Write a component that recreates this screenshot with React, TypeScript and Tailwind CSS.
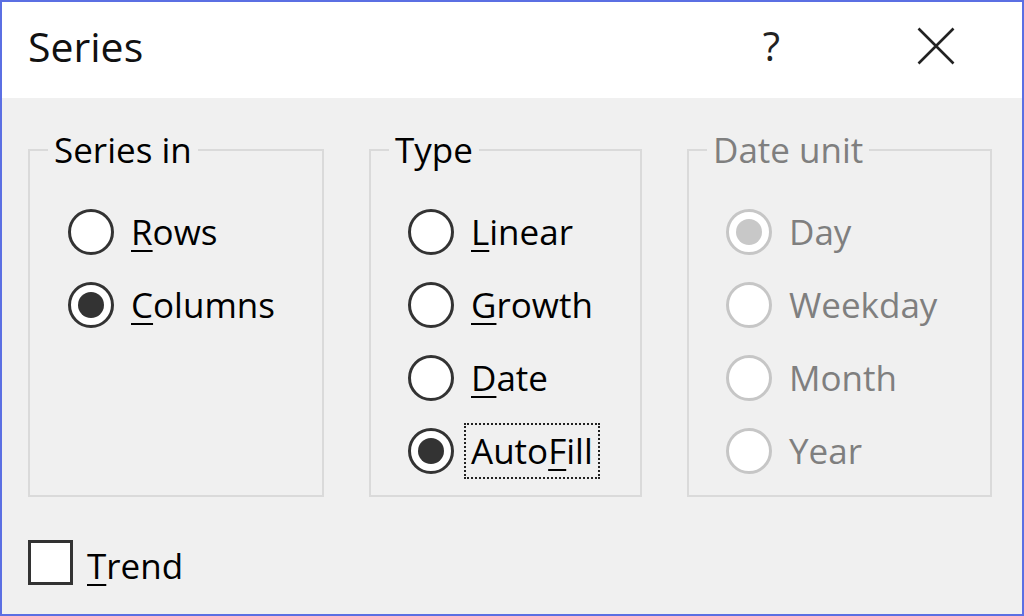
import React from "react";

type Opt = { label: string; key?: number; checked?: boolean; focus?: boolean };

function Radio({ checked, disabled }: { checked?: boolean; disabled?: boolean }) {
  return (
    <div
      className={`w-[46px] h-[46px] rounded-full border-[3px] bg-white flex items-center justify-center shrink-0 ${
        disabled ? "border-[#c6c6c6]" : "border-[#333333]"
      }`}
    >
      {checked && (
        <div className={`w-[26px] h-[26px] rounded-full ${disabled ? "bg-[#c8c8c8]" : "bg-[#333333]"}`} />
      )}
    </div>
  );
}

function Label({ text, k }: { text: string; k?: number }) {
  if (k === undefined) return <>{text}</>;
  return (
    <>
      {text.slice(0, k)}
      <span className="underline decoration-2 underline-offset-[5px]">{text[k]}</span>
      {text.slice(k + 1)}
    </>
  );
}

function Group({
  title,
  width,
  pl,
  opts,
  disabled,
}: {
  title: string;
  width: string;
  pl: string;
  opts: Opt[];
  disabled?: boolean;
}) {
  return (
    <fieldset className={`${width} h-[367px] border-2 border-[#dadada]`}>
      <legend
        className={`ml-[18px] px-[6px] leading-[40px] ${disabled ? "text-[#7f7f7f]" : "text-black"}`}
      >
        {title}
      </legend>
      <div className={`${pl} pt-[25px]`}>
        {opts.map((o) => (
          <div key={o.label} className="h-[73px] flex items-center gap-[16px]">
            <Radio checked={o.checked} disabled={disabled} />
            <span
              className={`leading-[52px] px-[5px] -mx-[6px] border-2 ${
                o.focus ? "border-dotted border-[#222222]" : "border-transparent"
              } ${disabled ? "text-[#7f7f7f]" : "text-black"}`}
            >
              <Label text={o.label} k={o.key} />
            </span>
          </div>
        ))}
      </div>
    </fieldset>
  );
}

export default function App() {
  return (
    <div className="w-[1024px] h-[616px] border-2 border-[#5b6fe3] bg-[#f0f0f0] flex flex-col font-['Open_Sans',sans-serif] text-[35px] text-black">
      <div className="h-[96px] bg-white flex items-center pl-[26px] pr-[67px] shrink-0">
        <span className="text-[41px] text-[#111111] leading-none pb-[8px]">Series</span>
        <span className="ml-auto text-[40px] text-[#222222] leading-none pb-[8px] mr-[2px]">?</span>
        <svg className="ml-[135px] mb-[8px]" width="38" height="38" viewBox="0 0 38 38">
          <path d="M1.5 1.5 L36.5 36.5 M36.5 1.5 L1.5 36.5" stroke="#222222" strokeWidth="2.6" fill="none" />
        </svg>
      </div>
      <div className="flex gap-[45px] pl-[26px] mt-[32px]">
        <Group
          title="Series in"
          width="w-[296px]"
          pl="pl-[38px]"
          opts={[
            { label: "Rows", key: 0 },
            { label: "Columns", key: 0, checked: true },
          ]}
        />
        <Group
          title="Type"
          width="w-[273px]"
          pl="pl-[37px]"
          opts={[
            { label: "Linear", key: 0 },
            { label: "Growth", key: 0 },
            { label: "Date", key: 0 },
            { label: "AutoFill", key: 4, checked: true, focus: true },
          ]}
        />
        <Group
          title="Date unit"
          width="w-[305px]"
          pl="pl-[37px]"
          disabled
          opts={[
            { label: "Day", checked: true },
            { label: "Weekday" },
            { label: "Month" },
            { label: "Year" },
          ]}
        />
      </div>
      <div className="flex items-center gap-[14px] pl-[26px] mt-[35px]">
        <div className="w-[45px] h-[45px] border-[3px] border-[#333333] bg-white shrink-0" />
        <span className="pt-[8px]">
          <Label text="Trend" k={0} />
        </span>
      </div>
    </div>
  );
}
